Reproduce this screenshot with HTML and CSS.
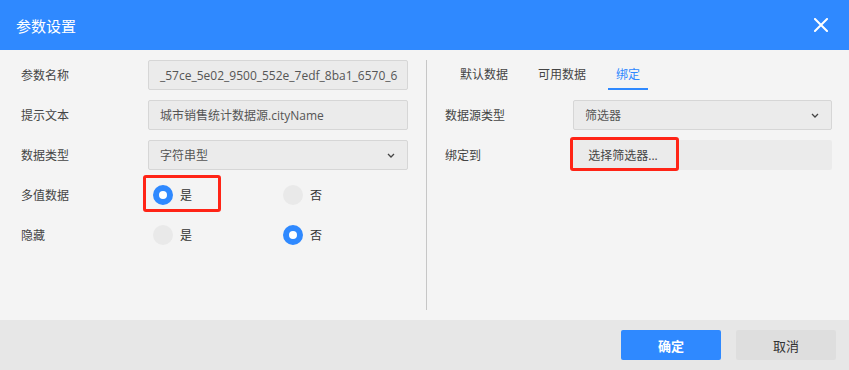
FILE: index.html
```html
<!DOCTYPE html>
<html lang="zh-CN">
<head>
<meta charset="utf-8">
<title>参数设置</title>
<link rel="stylesheet" href="styles.css">
</head>
<body>
<div class="dialog">
  <header class="header">
    <span class="title">参数设置</span>
    <svg class="close" width="14" height="14" viewBox="0 0 14 14"><path d="M1 1L13 13M13 1L1 13" stroke="#fff" stroke-width="2" stroke-linecap="square"/></svg>
  </header>
  <main class="body">
    <section class="left">
      <div class="row"><span class="label">参数名称</span><div class="field input">_57ce_5e02_9500_552e_7edf_8ba1_6570_6</div></div>
      <div class="row"><span class="label">提示文本</span><div class="field input">城市销售统计数据源.cityName</div></div>
      <div class="row"><span class="label">数据类型</span><div class="field input select">字符串型<svg class="chev" width="8" height="5" viewBox="0 0 8 5"><path d="M1 1L4 4L7 1" fill="none" stroke="#444" stroke-width="1.3"/></svg></div></div>
      <div class="row"><span class="label">多值数据</span>
        <div class="field radios">
          <span class="opt mark"><i class="dot on"></i>是</span>
          <span class="opt"><i class="dot"></i>否</span>
        </div>
      </div>
      <div class="row"><span class="label">隐藏</span>
        <div class="field radios">
          <span class="opt"><i class="dot"></i>是</span>
          <span class="opt"><i class="dot on"></i>否</span>
        </div>
      </div>
    </section>
    <section class="right">
      <div class="tabs">
        <span class="tab">默认数据</span>
        <span class="tab">可用数据</span>
        <span class="tab active">绑定</span>
      </div>
      <div class="row"><span class="label rlabel">数据源类型</span><div class="field rfield input select">筛选器<svg class="chev" width="8" height="5" viewBox="0 0 8 5"><path d="M1 1L4 4L7 1" fill="none" stroke="#444" stroke-width="1.3"/></svg></div></div>
      <div class="row"><span class="label rlabel">绑定到</span><div class="field rfield bind"><span class="pick">选择筛选器...</span></div></div>
    </section>
  </main>
  <footer class="footer">
    <button class="btn primary">确定</button>
    <button class="btn">取消</button>
  </footer>
</div>
</body>
</html>
```
FILE: styles.css
```css
html, body {
  margin: 0;
  padding: 0;
}
body {
  width: 849px;
  height: 370px;
  overflow: hidden;
  font-family: "Open Sans", "Noto Sans CJK SC", sans-serif;
  font-size: 12px;
  color: #333;
}
.dialog {
  display: flex;
  flex-direction: column;
  height: 370px;
}
.header {
  height: 50px;
  background: #2f89ff;
  display: flex;
  align-items: center;
  justify-content: space-between;
  padding: 0 21px 0 16px;
  flex-shrink: 0;
}
.title {
  color: #fff;
  font-size: 15px;
}
.body {
  height: 270px;
  box-sizing: border-box;
  padding: 10px 0;
  background: #f4f4f4;
  display: flex;
}
.left {
  width: 426px;
  box-sizing: border-box;
  padding-left: 21px;
  display: flex;
  flex-direction: column;
  gap: 10px;
}
.right {
  flex: 1;
  border-left: 1px solid #c6c6c6;
  padding-left: 18px;
  display: flex;
  flex-direction: column;
  gap: 10px;
}
.row {
  display: flex;
  align-items: center;
  height: 30px;
}
.label {
  width: 127px;
  color: #444;
}
.rlabel {
  width: 128px;
}
.field {
  width: 260px;
  height: 30px;
  box-sizing: border-box;
}
.rfield {
  width: 259px;
}
.input {
  background: #ebebeb;
  border: 1px solid #d6d6d6;
  border-radius: 2px;
  padding: 0 11px;
  display: flex;
  align-items: center;
  white-space: nowrap;
  overflow: hidden;
  color: #555;
  position: relative;
}
.select {
  justify-content: space-between;
}
.chev {
  flex-shrink: 0;
  margin-right: 1px;
}
.radios {
  display: grid;
  grid-template-columns: 130px 130px;
  align-items: center;
}
.opt {
  display: flex;
  align-items: center;
  gap: 7px;
  padding-left: 5px;
  position: relative;
  color: #333;
}
.dot {
  width: 20px;
  height: 20px;
  border-radius: 50%;
  background: #e9e9e9;
  box-sizing: border-box;
}
.dot.on {
  background: #fff;
  border: 6px solid #2f89ff;
}
.mark::after {
  content: "";
  position: absolute;
  left: -5px;
  top: -10px;
  width: 78px;
  height: 37px;
  box-sizing: border-box;
  border: 3px solid #ff2416;
  border-radius: 3px;
}
.tabs {
  height: 30px;
  display: flex;
  gap: 14px;
  padding-left: 7px;
}
.tab {
  height: 30px;
  box-sizing: border-box;
  padding: 0 8px;
  display: flex;
  align-items: center;
  border-bottom: 2px solid transparent;
  color: #444;
}
.tab.active {
  color: #2f89ff;
  border-bottom-color: #2f89ff;
}
.bind {
  background: #ebebeb;
  border-radius: 2px;
  display: flex;
}
.pick {
  width: 104px;
  height: 30px;
  display: flex;
  align-items: center;
  justify-content: center;
  color: #444;
  position: relative;
  padding-right: 4px;
  box-sizing: border-box;
}
.pick::after {
  content: "";
  position: absolute;
  left: -3px;
  top: -3px;
  width: 109px;
  height: 34px;
  box-sizing: border-box;
  border: 3px solid #ff2416;
  border-radius: 3px;
}
.footer {
  height: 50px;
  background: #e7e7e7;
  display: flex;
  align-items: center;
  justify-content: flex-end;
  gap: 15px;
  padding-right: 13px;
  flex-shrink: 0;
}
.btn {
  width: 100px;
  height: 30px;
  border: none;
  border-radius: 2px;
  background: #dedede;
  color: #333;
  font-family: "Open Sans", "Noto Sans CJK SC", sans-serif;
  font-size: 13px;
  padding: 0;
}
.btn.primary {
  background: #2f89ff;
  color: #fff;
  font-weight: bold;
}
```
